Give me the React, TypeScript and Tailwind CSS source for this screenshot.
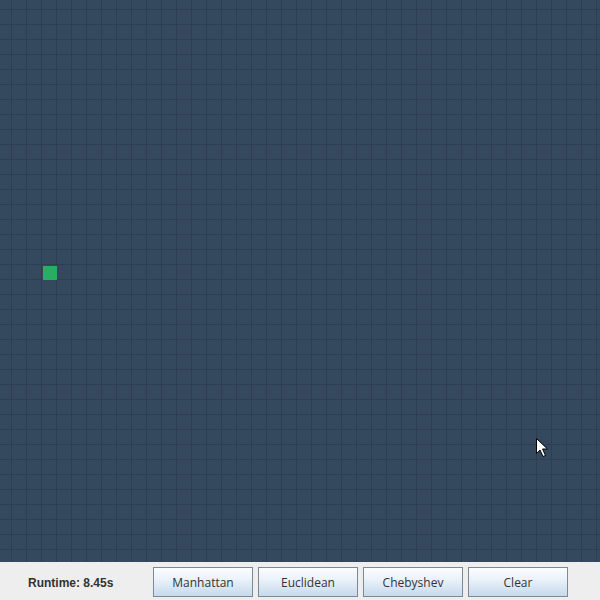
import React from 'react';

const CELL = 15;

function GridCanvas() {
  return (
    <div className="relative flex-1 bg-[#34495e] overflow-hidden">
      <svg className="absolute inset-0 w-full h-full" aria-hidden>
        <defs>
          <pattern id="grid" x="11" y="9" width={CELL} height={CELL} patternUnits="userSpaceOnUse">
            <path d={`M 0 0.5 H ${CELL} M 0.5 0 V ${CELL}`} stroke="#2c3e50" strokeWidth="1" fill="none" />
          </pattern>
        </defs>
        <rect width="100%" height="100%" fill="url(#grid)" />
        <rect x="43" y="266" width="14" height="14" fill="#27ae60" />
      </svg>
      {/* mouse pointer */}
      <svg className="absolute left-[535px] top-[437px]" width="14" height="21" viewBox="0 0 14 21">
        <path d="M1.5 1.5 L1.5 16.5 L5 13 L8 19.5 L10.5 18.5 L7.5 12 L12.5 12 Z" fill="#ffffff" stroke="#000000" strokeWidth="1" strokeLinejoin="miter" />
      </svg>
    </div>
  );
}

function ToolButton({ label }: { label: string }) {
  return (
    <button className="w-[100px] h-[30px] pt-[2px] border border-[#7a8a99] bg-[linear-gradient(to_bottom,#fbfdff,#eef4fb_35%,#c6d9ec)] text-[12px] text-[#333] font-['Open_Sans',sans-serif]">
      {label}
    </button>
  );
}

export default function App() {
  return (
    <div className="w-[600px] h-[600px] flex flex-col bg-[#eeeeee]">
      <GridCanvas />
      <div className="h-[38px] flex items-start pt-[5px] pl-[28px]">
        <div className="w-[125px] h-[30px] pt-[2px] flex items-center text-[12px] font-bold text-[#333] font-['Liberation_Sans',Arial,sans-serif]">
          Runtime: 8.45s
        </div>
        <div className="flex gap-[5px]">
          <ToolButton label="Manhattan" />
          <ToolButton label="Euclidean" />
          <ToolButton label="Chebyshev" />
          <ToolButton label="Clear" />
        </div>
      </div>
    </div>
  );
}
